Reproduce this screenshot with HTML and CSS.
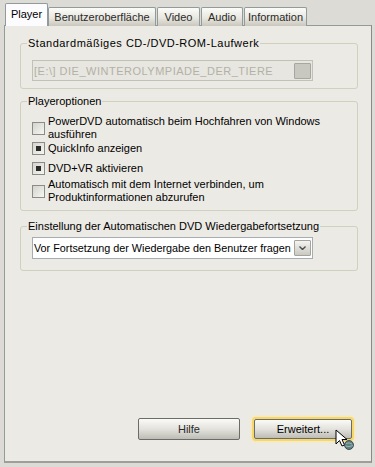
FILE: index.html
```html
<html>
  <head>
    <link rel="stylesheet" href="styles.css">
  </head>
  <body>
    <div class="tabs">
      <div class="tab active t-player">Player</div>
      <div class="tab t-ui">Benutzeroberfläche</div>
      <div class="tab t-video">Video</div>
      <div class="tab t-audio">Audio</div>
      <div class="tab t-info">Information</div>
    </div>
    <div class="panel">
      <fieldset class="group first">
        <legend>Standardmäßiges CD-/DVD-ROM-Laufwerk</legend>
        <div class="combo disabled">
          <span class="combo-text">[E:\] DIE_WINTEROLYMPIADE_DER_TIERE</span>
          <span class="combo-btn"></span>
        </div>
      </fieldset>

      <fieldset class="group options">
        <legend>Playeroptionen</legend>
        <div class="check">
          <span class="box"></span>
          <span class="label">PowerDVD automatisch beim Hochfahren von Windows ausführen</span>
        </div>
        <div class="check">
          <span class="box checked"></span>
          <span class="label">QuickInfo anzeigen</span>
        </div>
        <div class="check spaced">
          <span class="box checked"></span>
          <span class="label">DVD+VR aktivieren</span>
        </div>
        <div class="check">
          <span class="box"></span>
          <span class="label">Automatisch mit dem Internet verbinden, um Produktinformationen abzurufen</span>
        </div>
      </fieldset>

      <fieldset class="group resume">
        <legend>Einstellung der Automatischen DVD Wiedergabefortsetzung</legend>
        <div class="combo">
          <span class="combo-text">Vor Fortsetzung der Wiedergabe den Benutzer fragen</span>
          <span class="combo-btn">
            <svg width="7" height="4" viewBox="0 0 7 4"><path d="M0.5 0.5 L3.5 3.5 L6.5 0.5" fill="none" stroke="#4d4d4d" stroke-width="1.4"/></svg>
          </span>
        </div>
      </fieldset>

      <div class="buttons">
        <button class="btn">Hilfe</button>
        <button class="btn focus">Erweitert...</button>
      </div>

      <svg class="cursor" width="20" height="22" viewBox="0 0 20 22">
        <path d="M1 1 L1 15 L4.5 11.5 L7 17 L9.5 16 L7 10.5 L12 10.5 Z" fill="#fff" stroke="#000" stroke-width="1"/>
        <circle cx="14" cy="16" r="4.5" fill="#5f7f86" stroke="#2c3a3e" stroke-width="0.8"/>
        <path d="M11 14.5 Q14 13 17 15 M10.5 17 Q14 18.5 18 16.5" fill="none" stroke="#a9c4b0" stroke-width="0.8"/>
      </svg>
    </div>
  </body>
</html>
```

FILE: styles.css
```css
body {
  margin: 0;
  width: 375px;
  height: 467px;
  background-color: #dcdbd5;
  font-family: "Liberation Sans", Arial, sans-serif;
  font-size: 11px;
  color: #000;
  overflow: hidden;
}

.tabs {
  display: flex;
  align-items: flex-end;
  height: 25px;
  padding-left: 5px;
  position: relative;
  z-index: 1;
}

.tab {
  box-sizing: border-box;
  height: 19px;
  line-height: 18px;
  margin-right: 1px;
  margin-bottom: -1px;
  text-align: center;
  border: 1px solid #919b9c;
  border-bottom: none;
  border-radius: 2px 2px 0 0;
  background: linear-gradient(#fbfbf9, #e8e7e0 55%, #c9c7bd);
  color: #2a2a2a;
}

.tab.active {
  height: 23px;
  line-height: 20px;
  margin-right: 0;
  background: #fcfcfe;
  color: #000;
}

.t-player { width: 43px; }
.t-ui { width: 108px; }
.t-video { width: 43px; }
.t-audio { width: 42px; }
.t-info { width: 63px; }

.panel {
  position: relative;
  display: flex;
  flex-direction: column;
  height: 435px;
  margin: 0 3px 0 4px;
  border: 1px solid #919b9c;
  border-right-color: #8a8a86;
  border-bottom: 2px solid #9f9e98;
  background-color: #eceae4;
}

.group {
  margin: 0 13px 0 15px;
  padding: 0 0 0 11px;
  border: 1px solid #d0d0bf;
  border-radius: 3px;
}

.group legend {
  padding: 0 1px;
  margin-left: -5px;
  line-height: 13px;
}

.group.first legend {
  letter-spacing: 0.5px;
}

.group.first {
  margin-top: 11px;
  padding-top: 10px;
  padding-bottom: 7px;
}

.group.options {
  margin-top: 6px;
  padding-top: 7px;
  padding-bottom: 5px;
}

.group.resume {
  margin-top: 9px;
  padding-top: 4px;
  padding-bottom: 11px;
}

.combo {
  box-sizing: border-box;
  display: flex;
  align-items: center;
  justify-content: space-between;
  width: 281px;
  height: 22px;
  border: 1px solid #a5acb2;
  background-color: #fff;
  padding-left: 1px;
  padding-right: 1px;
  font-size: 10.8px;
}

.combo.disabled {
  height: 21px;
  background-color: #e7e6e0;
  border-color: #c2c1b8;
  color: #b3b1a6;
  font-size: 11px;
  letter-spacing: 0.5px;
}

.combo-text {
  white-space: nowrap;
}

.combo-btn {
  box-sizing: border-box;
  display: flex;
  align-items: center;
  justify-content: center;
  width: 17px;
  height: 16px;
  border: 1px solid #a4a39c;
  border-radius: 1px;
  background: linear-gradient(#f4f4f1, #c9c8c1);
}

.combo.disabled .combo-btn {
  background: #c9c8c0;
  border-color: #a8a79f;
}

.check {
  display: flex;
  align-items: center;
  line-height: 13px;
  margin-bottom: 1px;
}

.check.spaced {
  margin-top: 7px;
  margin-bottom: 3px;
}

.box {
  box-sizing: border-box;
  flex: none;
  width: 13px;
  height: 13px;
  margin-right: 3px;
  border: 1px solid #8c8c86;
  background: linear-gradient(135deg, #d4d3cc, #f6f6f3);
  display: flex;
  align-items: center;
  justify-content: center;
}

.box.checked::after {
  content: "";
  width: 5px;
  height: 5px;
  background-color: #2a2a2a;
}

.label {
  width: 290px;
}

.buttons {
  margin-top: auto;
  margin-bottom: 21px;
  display: flex;
  justify-content: flex-end;
  align-items: center;
  padding-right: 17px;
  gap: 14px;
}

.btn {
  width: 102px;
  height: 22px;
  font-family: "Liberation Sans", Arial, sans-serif;
  font-size: 11px;
  color: #2a2a2a;
  border: 1px solid #6c6c66;
  border-radius: 2px;
  background: linear-gradient(#fafaf8, #e3e2dc 50%, #bdbcb5);
  padding: 0;
}

.btn.focus {
  width: 98px;
  height: 20px;
  margin-right: 2px;
  color: #000;
  box-shadow: 0 0 0 2px #f5d76e, 0 0 2px 3px #fbeaa8;
}

.cursor {
  position: absolute;
  left: 330px;
  top: 403px;
}
```
